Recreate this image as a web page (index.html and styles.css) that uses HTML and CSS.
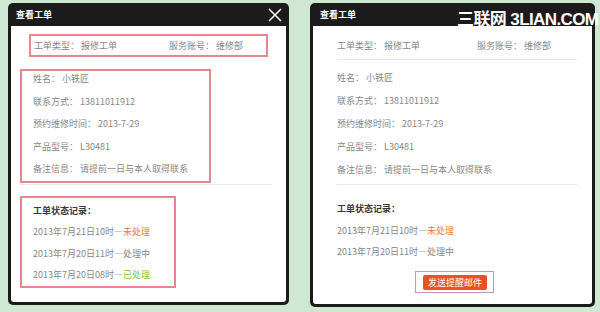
FILE: index.html
```html
<!DOCTYPE html>
<html lang="zh-CN">
<head>
    <meta charset="UTF-8">
    <title>查看工单</title>
    <link rel="stylesheet" href="styles.css">
</head>
<body>
    <div class="panel panel-left">
        <div class="head">
            <span class="title">查看工单</span>
            <svg class="close" width="14" height="14" viewBox="0 0 14 14">
                <path d="M1 1L13 13M13 1L1 13" stroke="#fff" stroke-width="1.5" fill="none"/>
            </svg>
        </div>
        <div class="body">
            <div class="mark box-top">
                <span class="w135">工单类型： 报修工单</span>
                <span>服务账号： 维修部</span>
            </div>
            <div class="mark box-info">
                <p>姓名： 小铁匠</p>
                <p>联系方式： 13811011912</p>
                <p>预约维修时间： 2013-7-29</p>
                <p>产品型号： L30481</p>
                <p>备注信息： 请提前一日与本人取得联系</p>
            </div>
            <div class="line line-left"></div>
            <div class="mark box-log">
                <h4>工单状态记录：</h4>
                <p>2013年7月21日10时—<span class="orange">未处理</span></p>
                <p>2013年7月20日11时—处理中</p>
                <p>2013年7月20日08时—<span class="green">已处理</span></p>
            </div>
        </div>
    </div>

    <div class="panel panel-right">
        <div class="head">
            <span class="title">查看工单</span>
            <span class="logo">三联网 3LIAN.COM</span>
        </div>
        <div class="body">
            <div class="row-top">
                <span class="w140">工单类型： 报修工单</span>
                <span>服务账号： 维修部</span>
            </div>
            <div class="line"></div>
            <div class="info">
                <p>姓名： 小铁匠</p>
                <p>联系方式： 13811011912</p>
                <p>预约维修时间： 2013-7-29</p>
                <p>产品型号： L30481</p>
                <p>备注信息： 请提前一日与本人取得联系</p>
            </div>
            <div class="line"></div>
            <div class="log">
                <h4>工单状态记录：</h4>
                <p>2013年7月21日10时—<span class="orange">未处理</span></p>
                <p>2013年7月20日11时—处理中</p>
            </div>
            <div class="btn-wrap">
                <a class="btn">发送提醒邮件</a>
            </div>
        </div>
    </div>
</body>
</html>
```

FILE: styles.css
```css
*{
    margin: 0;
    padding: 0;
}
body{
    width: 600px;
    height: 312px;
    background-color: #cfe8d3;
    display: flex;
    align-items: flex-start;
    padding: 3px 0 0 8px;
    box-sizing: border-box;
    font-family: "Noto Sans CJK SC", "Liberation Sans", sans-serif;
    font-size: 9px;
    color: #888;
    overflow: hidden;
}
.panel{
    background-color: #1b1b1b;
    border-radius: 5px;
    padding: 0 3px 3px;
    position: relative;
    display: flex;
    flex-direction: column;
}
.panel-left{
    width: 281px;
    height: 302px;
    box-sizing: border-box;
}
.panel-right{
    width: 285px;
    height: 304px;
    box-sizing: border-box;
    margin-left: 21px;
}
.head{
    height: 23px;
    display: flex;
    align-items: center;
    justify-content: space-between;
    padding: 0 4px 0 5px;
}
.title{
    color: #fff;
    font-weight: bold;
    font-size: 9px;
}
.panel-right .title{
    padding-left: 2px;
}
.close{
    margin-top: 1px;
}
.logo{
    position: absolute;
    left: 147px;
    top: 2px;
    color: #fff;
    font-family: "Liberation Sans", "Noto Sans CJK SC", sans-serif;
    font-size: 17px;
    font-weight: bold;
    letter-spacing: -0.6px;
    white-space: nowrap;
}
.body{
    flex: 1;
    background-color: #fff;
    border-radius: 0 0 3px 3px;
}
p, h4{
    height: 16px;
    line-height: 16px;
    white-space: nowrap;
}
h4{
    color: #3a3a3a;
    font-weight: bold;
    font-size: 9px;
}
.orange{
    color: #f0793d;
}
.green{
    color: #8cc43c;
}
.mark{
    border: 2px solid #e58890;
    box-sizing: border-box;
}
.box-top{
    margin: 8px 0 0 18px;
    width: 239px;
    height: 23px;
    display: flex;
    align-items: center;
    padding-left: 3px;
}
.w135{
    width: 135px;
}
.box-info{
    margin: 12px 0 0 9px;
    width: 191px;
    height: 114px;
    padding: 0 0 0 11px;
    display: flex;
    flex-direction: column;
    gap: 6.5px;
}
.line{
    height: 1px;
    background-color: #e6e6e6;
    margin-left: 24px;
    width: 240px;
}
.line-left{
    margin: 1px 0 0 9px;
    width: 252px;
}
.box-log{
    margin: 11px 0 0 9px;
    width: 156px;
    height: 92px;
    padding: 5px 0 0 11px;
    display: flex;
    flex-direction: column;
    gap: 5.3px;
}
.row-top{
    display: flex;
    align-items: center;
    height: 16px;
    margin: 11px 0 0 24px;
}
.panel-right .line{
    margin-top: 6px;
}
.w140{
    width: 140px;
}
.info{
    margin: 10px 0 0 24px;
    display: flex;
    flex-direction: column;
    gap: 7px;
}
.log{
    margin: 16px 0 0 24px;
    display: flex;
    flex-direction: column;
    gap: 5.5px;
}
.btn-wrap{
    margin: 11px 0 0 102px;
    width: 79px;
    height: 22px;
    border: 1px solid #c995b5;
    box-sizing: border-box;
    display: flex;
    align-items: center;
    padding-left: 7px;
}
.btn{
    display: block;
    width: 64px;
    height: 15px;
    line-height: 15px;
    background-color: #e9541c;
    color: #fff;
    text-align: center;
    border-radius: 2px;
    font-size: 9px;
}
```
